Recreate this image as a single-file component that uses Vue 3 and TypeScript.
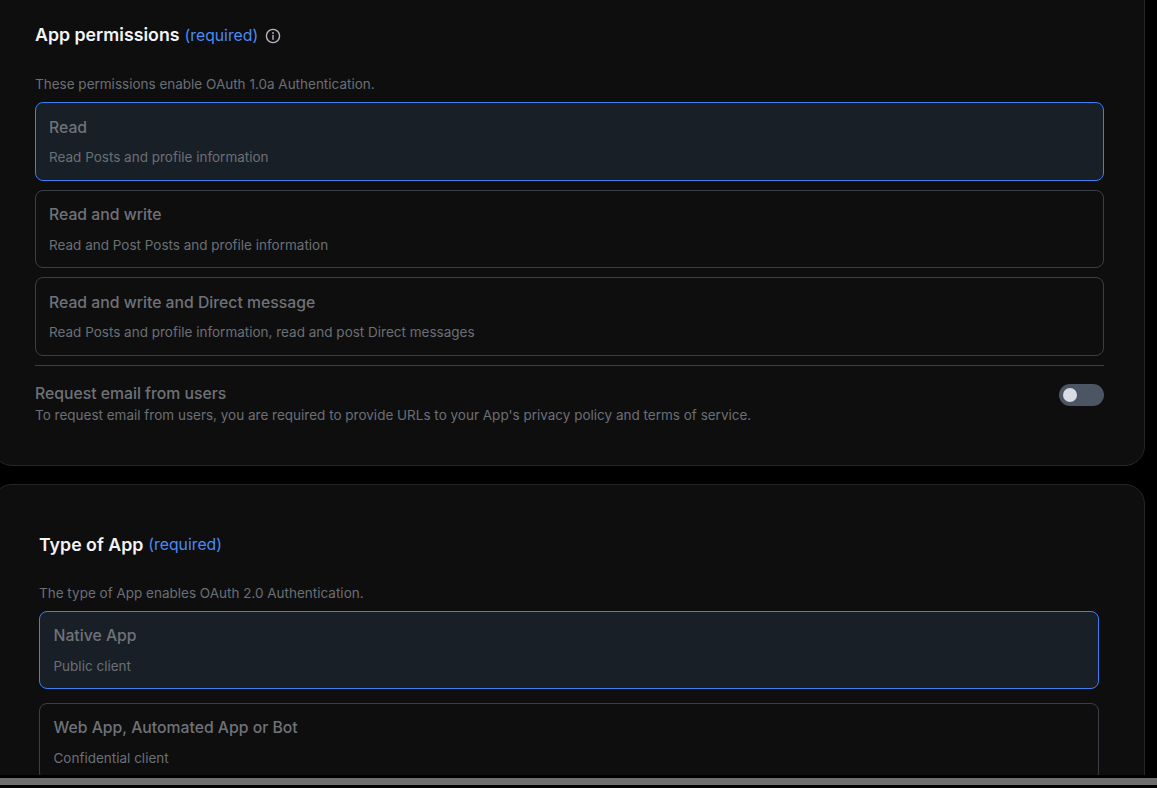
<script setup lang="ts">
interface Option { title: string; sub: string; active?: boolean }
const perms: Option[] = [
  { title: 'Read', sub: 'Read Posts and profile information', active: true },
  { title: 'Read and write', sub: 'Read and Post Posts and profile information' },
  { title: 'Read and write and Direct message', sub: 'Read Posts and profile information, read and post Direct messages' },
]
const types: Option[] = [
  { title: 'Native App', sub: 'Public client', active: true },
  { title: 'Web App, Automated App or Bot', sub: 'Confidential client' },
]
</script>

<template>
  <div class="page">
    <div class="viewport">
      <div class="scroll">
        <section class="card first">
          <h2 class="heading">
            <span>App permissions</span>
            <span class="req">(required)</span>
            <svg class="info" viewBox="0 0 16 16" width="16" height="16" fill="none" stroke="currentColor" stroke-width="1.4">
              <circle cx="8" cy="8" r="6.6" />
              <path d="M8 7.4v3.8" stroke-linecap="round" />
              <circle cx="8" cy="5" r="0.9" fill="currentColor" stroke="none" />
            </svg>
          </h2>
          <p class="desc">These permissions enable OAuth 1.0a Authentication.</p>
          <div class="options perms">
            <div v-for="o in perms" :key="o.title" class="option" :class="{ active: o.active }">
              <div class="opt-title">{{ o.title }}</div>
              <div class="opt-sub">{{ o.sub }}</div>
            </div>
          </div>
          <div class="email">
            <div>
              <div class="email-title">Request email from users</div>
              <div class="email-sub">To request email from users, you are required to provide URLs to your App's privacy policy and terms of service.</div>
            </div>
            <div class="toggle"><span class="knob"></span></div>
          </div>
        </section>
        <section class="card second">
          <h2 class="heading">
            <span>Type of App</span>
            <span class="req">(required)</span>
          </h2>
          <p class="desc">The type of App enables OAuth 2.0 Authentication.</p>
          <div class="options types">
            <div v-for="o in types" :key="o.title" class="option" :class="{ active: o.active }">
              <div class="opt-title">{{ o.title }}</div>
              <div class="opt-sub">{{ o.sub }}</div>
            </div>
          </div>
        </section>
      </div>
    </div>
    <div class="hbar"></div>
  </div>
</template>

<style>
html, body { margin: 0; background: #000; }
</style>

<style scoped>
.page {
  height: 788px;
  overflow: hidden;
  background: #000;
  font-family: Inter, "Liberation Sans", sans-serif;
}
.viewport { height: 775px; overflow: hidden; }
.scroll {
  display: flex;
  flex-direction: column;
  gap: 18px;
  width: 1153px;
  margin-left: -8px;
  margin-top: -40px;
}
.card {
  box-sizing: border-box;
  background: #0e0e0e;
  border: 1px solid #262626;
  border-radius: 20px;
}
.first { height: 506px; padding: 61px 40px 0 42px; }
.second { height: 400px; padding: 47px 45px 0 46px; }
.heading {
  margin: 0;
  height: 26px;
  display: flex;
  align-items: center;
  gap: 5px;
  font-size: 17.75px;
  line-height: 26px;
  font-weight: 600;
  color: #f3f4f6;
}
.req { font-size: 15.75px; font-weight: 400; color: #4a8af5; }
.first .req { margin-top: 2px; }
.info { margin: 2px 0 0 2px; color: #b4b8bf; }
.desc {
  margin: 26px 0 0;
  font-size: 13.5px;
  line-height: 20px;
  color: #6b6f76;
}
.second .desc { margin-top: 25px; }
.options { display: flex; flex-direction: column; }
.perms { margin-top: 8px; gap: 9px; }
.types { margin-top: 8px; gap: 14px; }
.option {
  box-sizing: border-box;
  height: 78.6px;
  padding: 12.6px 13px 0;
  border: 1px solid #3a3f47;
  border-radius: 8px;
}
.types .option { height: 78px; padding: 11.6px 13.5px 0; }
.option.active { background: #181f27; border-color: #3b7ff0; }
.opt-title {
  font-size: 15.75px;
  line-height: 24px;
  font-weight: 500;
  color: #6f7278;
}
.opt-sub {
  margin-top: 7.4px;
  font-size: 13.5px;
  line-height: 20px;
  color: #6b6f76;
}
.types .opt-sub { margin-top: 8.4px; }
.email {
  margin-top: 9px;
  padding-top: 18px;
  border-top: 1px solid #3a3f47;
  display: flex;
  justify-content: space-between;
  align-items: flex-start;
}
.email-title { font-size: 15.75px; line-height: 19px; font-weight: 500; color: #6f7278; }
.email-sub { margin-top: 2px; font-size: 13.5px; line-height: 20px; color: #6b6f76; }
.toggle {
  box-sizing: border-box;
  width: 45px;
  height: 22px;
  padding: 4px;
  border-radius: 11px;
  background: #4b5563;
  display: flex;
  align-items: center;
}
.knob { width: 14px; height: 14px; border-radius: 50%; background: #d9dce3; }
.hbar { height: 7px; margin-top: 3px; background: #6e6e6e; }
</style>
